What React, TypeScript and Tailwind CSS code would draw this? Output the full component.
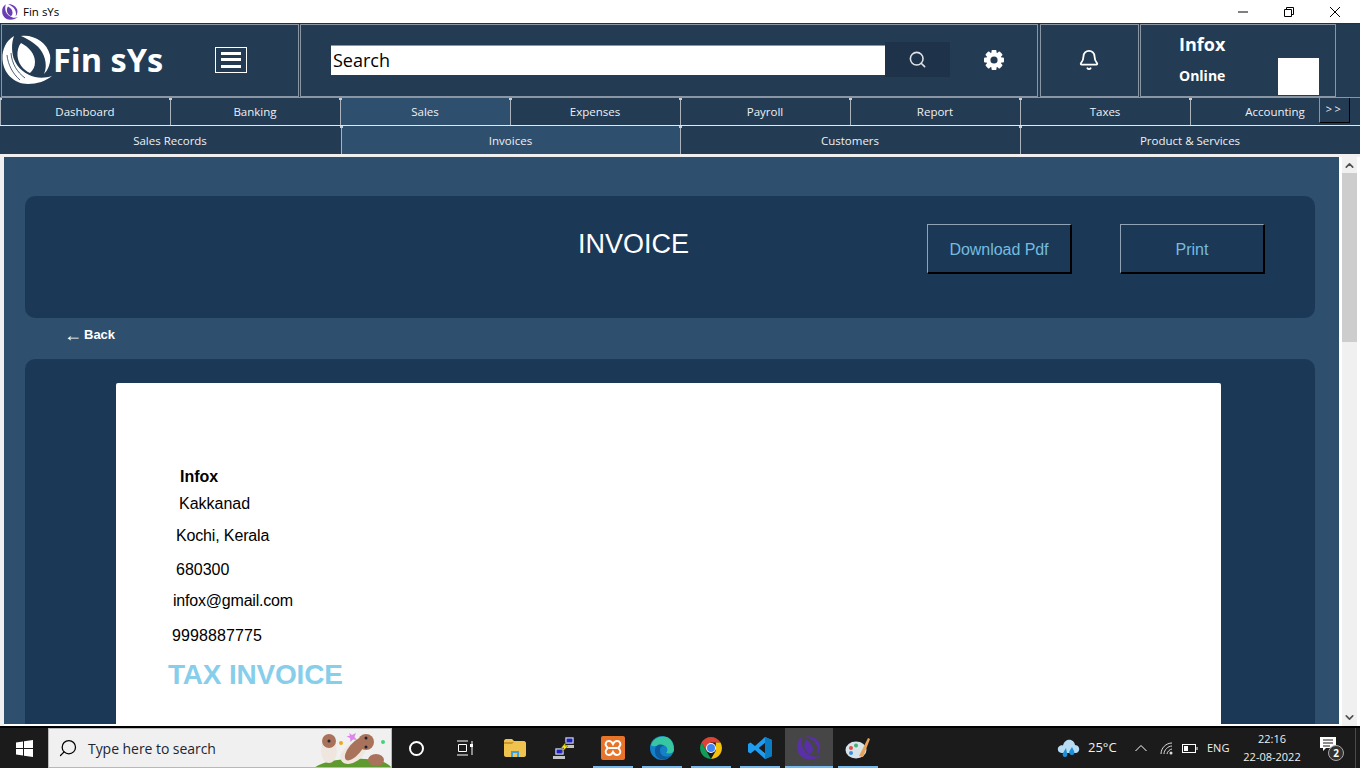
import { Bell, ChevronDown, ChevronUp, Search } from "lucide-react";

const mainTabs = ["Dashboard", "Banking", "Sales", "Expenses", "Payroll", "Report", "Taxes", "Accounting"];
const subTabs = [
  { label: "Sales Records", width: "w-[341px]" },
  { label: "Invoices", width: "w-[339px]" },
  { label: "Customers", width: "w-[340px]" },
  { label: "Product & Services", width: "w-[340px]" },
];

function LogoMark({ size, color, cut }: { size: number; color: string; cut?: string }) {
  return (
    <svg width={size} height={size} viewBox="0 0 50 50" fill="none">
      {/* outer left crescent with the tail */}
      <path d="M12 1C4 6 0 14 0.5 24C1 38 12 49 26 49C35 49 44 46 50 41C44 43 38 43 33 42C24 40 15 33 11.5 23C9.5 15 9.5 8 12 1Z" fill={color} />
      <path d="M19 1C31 -1 45 7 48 20C49 27 47 34 42 39C45 32 44 24 40 17C36 10 28 5 19 1Z" fill={color} />
      {/* centre leaf */}
      <path d="M19 8C27 12 33 19 33 27C33 32 31 35 28 38C21 35 16 28 15.5 21C15 16 16.5 11 19 8Z" fill={color} />
      {cut ? <path d="M5 20C6 30 11 39 18 45M9 18C10 29 15 37 23 43" stroke={cut} strokeWidth="0.8" /> : null}
    </svg>
  );
}

function Gear() {
  return (
    <svg width="20" height="20" viewBox="0 0 20 20" fill="#fff">
      {[0, 45, 90, 135].map((angle) => (
        <rect key={angle} x="7.5" y="0" width="5" height="20" rx="1" transform={`rotate(${angle} 10 10)`} />
      ))}
      <circle cx="10" cy="10" r="7.8" />
      <circle cx="10" cy="10" r="3.6" fill="#233b53" />
    </svg>
  );
}

function Notch() {
  return <span className="absolute -left-[2px] top-0 h-[2px] w-[3px] bg-[#c8ced4]" />;
}

function TaskbarApp({ children, active }: { children: React.ReactNode; active?: boolean }) {
  return (
    <div className={`relative flex h-[40px] w-[49px] items-center justify-center ${active ? "bg-[linear-gradient(to_right,transparent_1px,#464646_1px)]" : ""}`}>
      {children}
      <span className={`absolute bottom-0 h-[2px] bg-[#76b9ed] ${active ? "left-[1px] w-[48px]" : "left-[5px] w-[40px]"}`} />
    </div>
  );
}

export default function App() {
  return (
    <div className="flex h-[768px] w-[1360px] flex-col overflow-hidden bg-white font-['Liberation_Sans',sans-serif]">
      {/* title bar */}
      <div className="flex h-[23px] shrink-0 items-center bg-white pl-[2px] font-['Open_Sans',sans-serif] text-[11.5px] text-black">
        <LogoMark size={16} color="#6a3fb5" />
        <span className="ml-[5px]">Fin sYs</span>
        <div className="ml-auto flex items-center">
          <svg width="12" height="12" viewBox="0 0 12 12" className="mr-[34px]"><path d="M1 6H11" stroke="#000" /></svg>
          <svg width="12" height="12" viewBox="0 0 12 12" className="mr-[34px]"><path d="M1.5 3.5H8.5V10.5H1.5ZM3.5 3.5V1.5H10.5V8.5H8.5" stroke="#000" fill="none" /></svg>
          <svg width="12" height="12" viewBox="0 0 12 12" className="mr-[19px]"><path d="M1 1L11 11M11 1L1 11" stroke="#000" /></svg>
        </div>
      </div>

      {/* header */}
      <div className="flex h-[74px] shrink-0 border-t border-[#2b2f33] bg-[#233b53] pl-[1px] font-['Open_Sans',sans-serif] text-white">
        <div className="flex w-[298px] items-center border border-[#8a96a3] pb-[2px]">
          <LogoMark size={50} color="#fff" cut="#233b53" />
          <span className="ml-[1px] mt-[2px] text-[32.5px] font-bold leading-none">Fin sYs</span>
          <div className="ml-[52px] flex h-[26px] w-8 flex-col items-center justify-center gap-[3.5px] border border-white">
            <span className="h-[3px] w-5 bg-white" />
            <span className="h-[3px] w-5 bg-white" />
            <span className="h-[3px] w-5 bg-white" />
          </div>
        </div>
        <div className="ml-[1px] flex w-[738px] items-center border border-[#8a96a3] pb-[2px] pl-[30px]">
          <div className="flex h-[30px] w-[554px] items-center border-t border-[#8a96a3] bg-white pl-[2px] text-[18px] text-black">
            Search
          </div>
          <div className="flex h-[35px] w-[65px] items-center justify-center bg-[#1e3349]">
            <Search size={19} strokeWidth={2} className="text-[#dfe3e7]" />
          </div>
          <div className="ml-[34px]"><Gear /></div>
        </div>
        <div className="ml-[2px] flex w-[99px] items-center justify-center border border-[#8a96a3] pb-[2px] pr-[2px]">
          <Bell size={22} strokeWidth={2} />
        </div>
        <div className="ml-[1px] flex w-[196px] border border-[#8a96a3] pl-[38px]">
          <div className="flex flex-col font-bold">
            <span className="mt-[7px] text-[18px] leading-6">Infox</span>
            <span className="mt-[10px] text-[14px] leading-5">Online</span>
          </div>
          <div className="ml-auto mr-[16px] mt-[33px] h-[37px] w-[41px] bg-white" />
        </div>
      </div>

      {/* main tabs */}
      <div className="relative flex h-[29px] shrink-0 border-t border-b border-t-[#8a96a3] border-b-[#e6e9ec] bg-[#233b53] font-['Open_Sans',sans-serif] text-[11.5px] text-[#eef1f4]">
        {mainTabs.map((tab) => (
          <div
            key={tab}
            className={`relative flex w-[170px] items-center justify-center border-l border-[#aab3bc] pr-[1px] ${tab === "Sales" ? "bg-[#2f4f6f]" : ""}`}
          >
            <Notch />
            {tab}
          </div>
        ))}
        <div className="absolute right-[10px] top-0 flex h-[25px] w-[31px] items-center justify-center border-r border-b border-l border-r-black border-b-black border-l-[#8a96a3] bg-[#233b53] pb-[1px] text-[11px] tracking-[2.5px]">
          &gt;&gt;
        </div>
      </div>

      {/* sub tabs */}
      <div className="flex h-[28px] shrink-0 bg-[#233b53] font-['Open_Sans',sans-serif] text-[11.5px] text-[#eef1f4]">
        {subTabs.map((tab) => (
          <div
            key={tab.label}
            className={`relative flex items-center justify-center pr-[1px] pt-[2px] ${tab.width} ${tab.label === "Sales Records" ? "" : "border-l border-[#aab3bc]"} ${tab.label === "Invoices" ? "bg-[#2f4f6f]" : ""}`}
          >
            {tab.label === "Sales Records" ? null : <Notch />}
            {tab.label}
          </div>
        ))}
      </div>

      {/* content */}
      <div className="flex min-h-0 flex-1 border-t-[3px] border-l-4 border-[#f0f0f0] bg-white">
        <div className="mb-[2px] flex w-[1335px] min-w-0 flex-col overflow-hidden bg-[#2f4f6f] pl-[21px] pt-[39px]">
          <div className="relative flex h-[122px] w-[1290px] shrink-0 rounded-[10px] bg-[#1c3857]">
            <span className="ml-[553px] mt-[33px] h-[31px] text-[27px] leading-[31px] text-white">INVOICE</span>
            <div className="absolute left-[902px] top-[28px] flex h-[50px] w-[145px] items-center justify-center border-t border-l border-r-2 border-b-2 border-t-[#8fa3b5] border-l-[#8fa3b5] border-r-black border-b-black pt-[2px] text-[16px] tracking-[-0.05px] text-[#74bcdf]">
              Download Pdf
            </div>
            <div className="absolute left-[1095px] top-[28px] flex h-[50px] w-[145px] items-center justify-center border-t border-l border-r-2 border-b-2 border-t-[#8fa3b5] border-l-[#8fa3b5] border-r-black border-b-black pt-[2px] text-[16px] text-[#74bcdf]">
              Print
            </div>
          </div>
          <div className="flex h-[41px] shrink-0 items-center gap-[2px] pb-[8px] pl-[39px] font-bold text-white">
            <span className="text-[18px] font-normal leading-none">←</span>
            <span className="text-[13px]">Back</span>
          </div>
          <div className="w-[1290px] flex-1 rounded-t-[10px] bg-[#1c3857] pl-[91px] pt-[24px]">
            <div className="h-full w-[1105px] rounded-t-[2px] bg-white text-[16px] text-black">
              <div className="pl-[64px] pt-[84px] text-[16px] font-bold leading-[20px]">Infox</div>
              <div className="pl-[63px] pt-[7px] leading-[20px]">Kakkanad</div>
              <div className="pl-[60px] pt-[12px] leading-[20px] tracking-[-0.15px]">Kochi, Kerala</div>
              <div className="pl-[60px] pt-[14px] leading-[20px]">680300</div>
              <div className="pl-[57px] pt-[11px] leading-[20px] tracking-[-0.2px]">infox@gmail.com</div>
              <div className="pl-[56px] pt-[15px] leading-[20px] tracking-[0.1px]">9998887775</div>
              <div className="pl-[52px] pt-[13px] text-[28px] font-bold leading-[32px] tracking-[-0.2px] text-[#87ceeb]">TAX INVOICE</div>
            </div>
          </div>
        </div>
        {/* scrollbar */}
        <div className="ml-[3px] flex w-[15px] shrink-0 flex-col bg-[#f0f0f0]">
          <div className="flex h-[16px] items-center justify-center"><ChevronUp size={13} strokeWidth={3} className="text-[#505050]" /></div>
          <div className="h-[169px] bg-[#cdcdcd]" />
          <div className="mt-auto flex h-[17px] items-center justify-center"><ChevronDown size={13} strokeWidth={3} className="text-[#505050]" /></div>
        </div>
      </div>

      {/* taskbar */}
      <div className="flex h-[42px] shrink-0 items-center border-t-2 border-black bg-[#1b1b1b] font-['Open_Sans',sans-serif] text-white">
        <div className="flex h-full w-[48px] items-center justify-center">
          <svg width="17" height="17" viewBox="0 0 17 17" fill="#fff"><path d="M0 2.5L7 1.5V8H0ZM8 1.3L17 0V8H8ZM0 9H7V15.5L0 14.5ZM8 9H17V17L8 15.7Z" /></svg>
        </div>
        <div className="relative flex h-[40px] w-[344px] items-center overflow-hidden border border-[#b8b8b8] bg-[#f0f0f0] pl-[9px] text-[14px] text-[#1b2733]">
          <Search size={20} strokeWidth={1.5} className="-scale-x-100 text-black" />
          <span className="ml-[10px] tracking-[-0.05px]">Type here to search</span>
          <svg width="78" height="40" viewBox="0 0 78 40" className="absolute right-0 top-0">
            <path d="M0 40C8 32 30 29 52 30C66 31 74 33 78 38V40Z" fill="#5f9a2e" />
            <ellipse cx="16" cy="22" rx="8" ry="12" fill="#efe6de" />
            <circle cx="16" cy="12" r="7" fill="#a9725a" />
            <ellipse cx="40" cy="24" rx="14" ry="9" fill="#efe6de" transform="rotate(-35 40 24)" />
            <ellipse cx="42" cy="20" rx="14" ry="6" fill="#a9725a" transform="rotate(-50 42 20)" />
            <circle cx="53" cy="13" r="8" fill="#a9725a" />
            <circle cx="16" cy="12" r="1.5" fill="#223" />
            <circle cx="53" cy="9" r="1.5" fill="#223" />
            <circle cx="53" cy="18" r="1.5" fill="#223" />
            <ellipse cx="63" cy="31" rx="8" ry="6" fill="#a9725a" />
            <path d="M36 4L39 6L43 4L41.5 8L44 11L40 10.5L37.5 13L37 9L33.5 7.5L37 6.5Z" fill="#dd88e8" />
            <circle cx="28" cy="14" r="2" fill="#f0a818" />
            <circle cx="70" cy="13" r="2" fill="#44d47a" />
          </svg>
        </div>
        <div className="flex w-[49px] justify-center">
          <div className="h-[15px] w-[15px] rounded-full border-2 border-white" />
        </div>
        <div className="flex w-[49px] justify-center pr-[2px]">
          <svg width="18" height="16" viewBox="0 0 18 16" fill="none" stroke="#fff"><path d="M1 1H12M1 15H12M2.5 4.5H10.5V11.5H2.5ZM16 1V15" /><rect x="14" y="4" width="3" height="3" fill="#fff" stroke="none" /></svg>
        </div>
        <div className="flex w-[49px] justify-center">
          <svg width="22" height="18" viewBox="0 0 22 18"><path d="M0 2C0 1 1 0 2 0H8L10 2H20C21 2 22 3 22 4V16C22 17 21 18 20 18H2C1 18 0 17 0 16Z" fill="#f0c34e" /><path d="M0 3H10L8 5H0Z" fill="#c99a2e" /><path d="M7 18V12H15V18H13V14H9V18Z" fill="#3aa0e4" /></svg>
        </div>
        <div className="flex w-[49px] justify-center">
          <svg width="24" height="24" viewBox="0 0 24 24"><rect x="13" y="1" width="9" height="7" fill="#d8dce8" stroke="#222" strokeWidth=".7" /><rect x="14.5" y="2.5" width="6" height="4" fill="#1a20c8" /><rect x="3" y="12" width="9" height="7" fill="#d8dce8" stroke="#222" strokeWidth=".7" /><rect x="4.5" y="13.5" width="6" height="4" fill="#1a20c8" /><rect x="1" y="20" width="12" height="3" fill="#c4c4c4" /><rect x="12" y="9" width="10" height="3" fill="#c4c4c4" /><path d="M14 6L9 12H12L9 17L16 10H13Z" fill="#f6e817" stroke="#333" strokeWidth=".4" /></svg>
        </div>
        <TaskbarApp>
          <svg width="24" height="24" viewBox="0 0 24 24"><rect width="24" height="24" rx="2" fill="#e8742a" /><path d="M8 5C10 5 11 6 12 8C13 6 14 5 16 5C19 5 20.5 8 18.5 10.5L17 12L18.5 13.5C20.5 16 19 19 16 19C14 19 13 18 12 16C11 18 10 19 8 19C5 19 3.5 16 5.5 13.5L7 12L5.5 10.5C3.5 8 5 5 8 5Z" fill="none" stroke="#fff" strokeWidth="2" /><path d="M8 12H16" stroke="#fff" strokeWidth="2" /></svg>
        </TaskbarApp>
        <TaskbarApp>
          <svg width="24" height="24" viewBox="0 0 24 24"><circle cx="12" cy="12" r="12" fill="#1380c8" /><path d="M1 9C3 2 11 -1 17 1C22 3 24 9 24 14C24 17 20 18 16 17C19 14 17 9 12 9C7 9 4 12 1 9Z" fill="#36c7a2" /><path d="M5 14C5 9 11 7 14 10C10 10 9 14 11 18C13 21 18 22 21 19C18 24 11 25 7 21C5 19 5 16 5 14Z" fill="#0d5a9e" /></svg>
        </TaskbarApp>
        <TaskbarApp>
          <svg width="22" height="22" viewBox="0 0 22 22"><path d="M1.5 5.5A11 11 0 0 1 20.5 5.5H11L6.2 13.8Z" fill="#db4437" /><path d="M20.5 5.5A11 11 0 0 1 11 22L15.8 13.8V5.5Z" fill="#f4c20d" /><path d="M1.5 5.5L6.2 13.8L11 22A11 11 0 0 1 1.5 5.5Z" fill="#0f9d58" /><circle cx="11" cy="11" r="5" fill="#fff" /><circle cx="11" cy="11" r="4" fill="#4285f4" /></svg>
        </TaskbarApp>
        <TaskbarApp>
          <svg width="24" height="24" viewBox="0 0 24 24"><path d="M17 1L24 4V20L17 23L7 14L2.5 17.5L0 16V8L2.5 6.5L7 10ZM17 7L11 12L17 17Z" fill="#1f9cf0" /><path d="M17 1L24 4V20L17 23Z" fill="#0a7cc4" /><path d="M17 7V17L11 12Z" fill="#1b1b1b" /></svg>
        </TaskbarApp>
        <TaskbarApp active>
          <LogoMark size={24} color="#5a30a8" />
        </TaskbarApp>
        <TaskbarApp>
          <svg width="26" height="24" viewBox="0 0 26 24"><ellipse cx="11" cy="14" rx="10.5" ry="8.5" fill="#d9e3ea" /><circle cx="6" cy="12" r="2" fill="#e24b4b" /><circle cx="11" cy="9.5" r="2" fill="#3fb56b" /><circle cx="6" cy="17" r="2" fill="#3a8fe0" /><path d="M14 20L23 2L25 3L18 21Z" fill="#e8a35a" /></svg>
        </TaskbarApp>

        <div className="ml-auto flex h-full items-center">
          <svg width="23" height="21" viewBox="0 0 23 21" className="mr-[8px]"><path d="M5 15C1 15 0 11 1.5 9C3 7 5 7 6 7.5C7 3 11 1 14 2C17 3 18 6 18 7C21 7 23 10 22 12.5C21 15 19 15 18 15Z" fill="#b8dcf2" /><path d="M9 10L6 15C5 17 6 19 8 19C10 19 11 17 10 15Z" fill="#1b8fd8" /><path d="M15 9L12.5 13C11.5 15 13 17 15 17C17 17 18 15 17 13Z" fill="#1b8fd8" /></svg>
          <span className="w-[41px] text-[13px] text-[#f0f0f0]">25°C</span>
          <svg width="12" height="8" viewBox="0 0 12 8" fill="none" stroke="#fff" className="ml-[6px] mr-[13px]"><path d="M0.5 7L6 1.5L11.5 7" /></svg>
          <svg width="13" height="13" viewBox="0 0 13 13" fill="none" stroke="#ddd" className="mr-[9px]"><path d="M1 12C1 6 6 1 12 1M4 12C4 8 8 4 12 4M7 12C7 10 10 7 12 7" /><circle cx="11" cy="11" r="1.5" fill="#ddd" stroke="none" /></svg>
          <svg width="16" height="9" viewBox="0 0 16 9" fill="none" stroke="#fff" className="mr-[9px]"><rect x="0.5" y="0.5" width="13" height="8" /><rect x="2" y="2" width="4" height="5" fill="#fff" stroke="none" /><path d="M15 3V6" /></svg>
          <span className="w-[34px] text-[11px] text-[#f0f0f0]">ENG</span>
          <div className="flex w-[62px] flex-col items-center text-[11px] leading-[18px] text-[#f0f0f0]">
            <span>22:16</span>
            <span className="whitespace-nowrap">22-08-2022</span>
          </div>
          <div className="relative ml-[17px] mr-[7px] h-[28px] w-[28px]">
            <svg width="17" height="15" viewBox="0 0 17 15" className="absolute left-0 top-[3px]"><path d="M0 0H16V11H6L3 14V11H0Z" fill="#fff" /><path d="M3 3H13M3 6H13M3 9H10" stroke="#1b1b1b" /></svg>
            <div className="absolute left-[8px] top-[11px] flex h-[16px] w-[16px] items-center justify-center rounded-full border border-[#aaa] bg-[#333] text-[10px] font-bold text-white">2</div>
          </div>
          <div className="mr-[4px] h-full w-px bg-[#4a4a4a]" />
        </div>
      </div>
    </div>
  );
}
